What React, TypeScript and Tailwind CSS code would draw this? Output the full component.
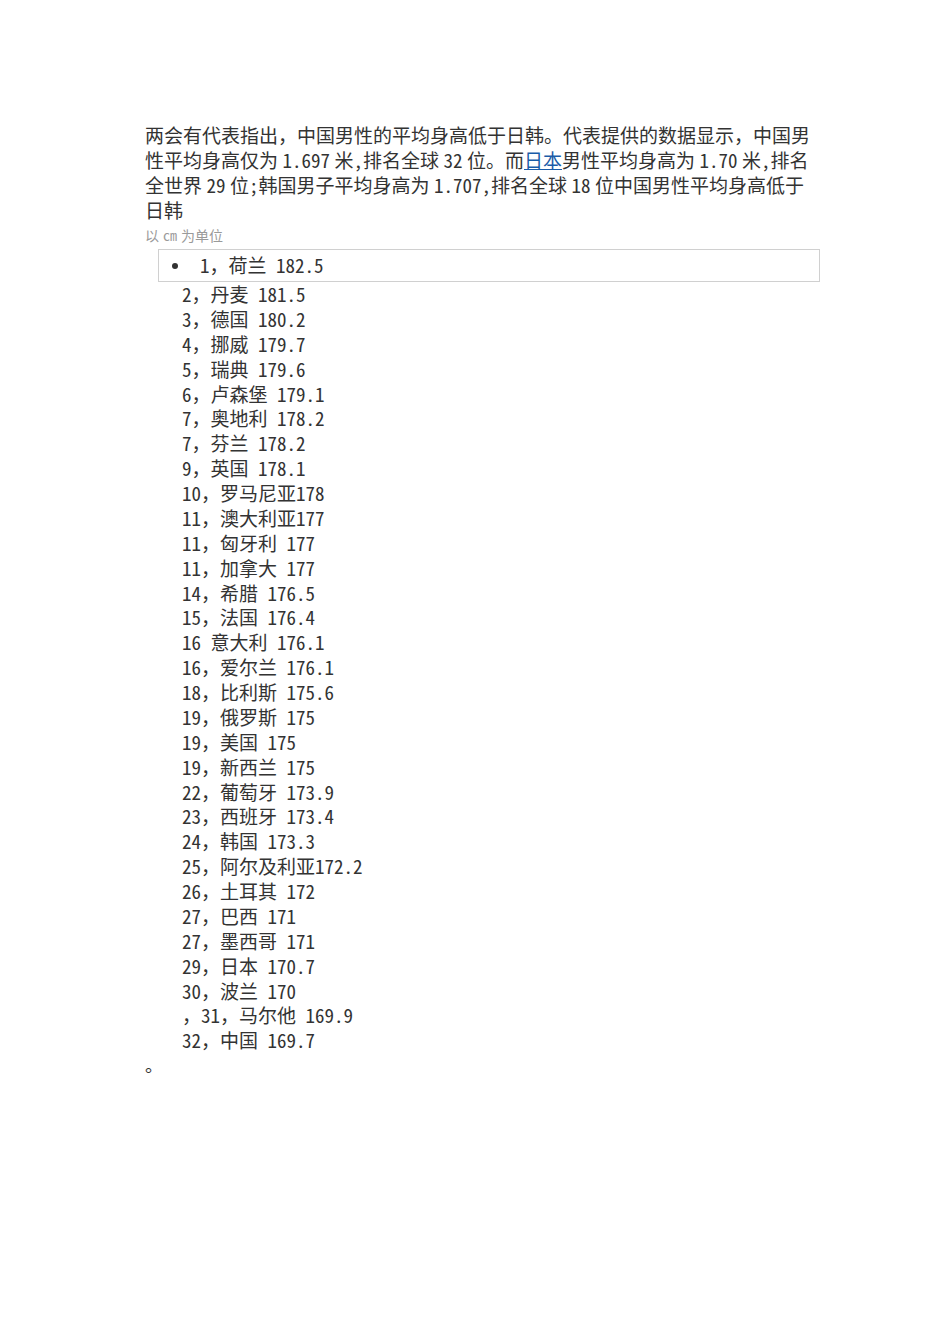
import React from "react";

const items = [
  "2，丹麦 181.5",
  "3，德国 180.2",
  "4，挪威 179.7",
  "5，瑞典 179.6",
  "6，卢森堡 179.1",
  "7，奥地利 178.2",
  "7，芬兰 178.2",
  "9，英国 178.1",
  "10，罗马尼亚178",
  "11，澳大利亚177",
  "11，匈牙利 177",
  "11，加拿大 177",
  "14，希腊 176.5",
  "15，法国 176.4",
  "16 意大利 176.1",
  "16，爱尔兰 176.1",
  "18，比利斯 175.6",
  "19，俄罗斯 175",
  "19，美国 175",
  "19，新西兰 175",
  "22，葡萄牙 173.9",
  "23，西班牙 173.4",
  "24，韩国 173.3",
  "25，阿尔及利亚172.2",
  "26，土耳其 172",
  "27，巴西 171",
  "27，墨西哥 171",
  "29，日本 170.7",
  "30，波兰 170",
  "，31，马尔他 169.9",
  "32，中国 169.7",
];

export default function App() {
  return (
    <div
      className="min-h-[1344px] w-[950px] bg-white text-[#333]"
      style={{ fontFamily: '"Noto Sans Mono CJK SC", "Liberation Serif", "Noto Sans CJK SC", serif' }}
    >
      <div className="pl-[145px] pt-[122px]">
        <div className="text-[19px] leading-[25px] [word-spacing:-5px]">
          <div className="whitespace-nowrap">两会有代表指出，中国男性的平均身高低于日韩。代表提供的数据显示，中国男</div>
          <div className="whitespace-nowrap">
            性平均身高仅为 1.697 米,排名全球 32 位。而
            <span className="text-[#1a5ca8] underline">日本</span>
            男性平均身高为 1.70 米,排名
          </div>
          <div className="whitespace-nowrap">全世界 29 位;韩国男子平均身高为 1.707,排名全球 18 位中国男性平均身高低于</div>
          <div className="whitespace-nowrap">日韩</div>
        </div>
        <div className="mt-[1px] text-[14px] leading-[25px] text-[#9a9a9a] [word-spacing:-3px]">以 cm 为单位</div>
        <div className="ml-[13px] mt-[1px] w-[662px] h-[33px] border border-[#d0d0d0] flex items-center text-[19px]">
          <span className="ml-[13px] w-[6px] h-[6px] rounded-full bg-[#333]" />
          <span className="ml-[22px] whitespace-pre">1，荷兰 182.5</span>
        </div>
        <div className="pl-[37px] text-[19px] leading-[24.87px]">
          {items.map((t, i) => (
            <div key={i} className="whitespace-pre">
              {t}
            </div>
          ))}
        </div>
        <div className="text-[18px] leading-[25px] -mt-[1px]">。</div>
      </div>
    </div>
  );
}
